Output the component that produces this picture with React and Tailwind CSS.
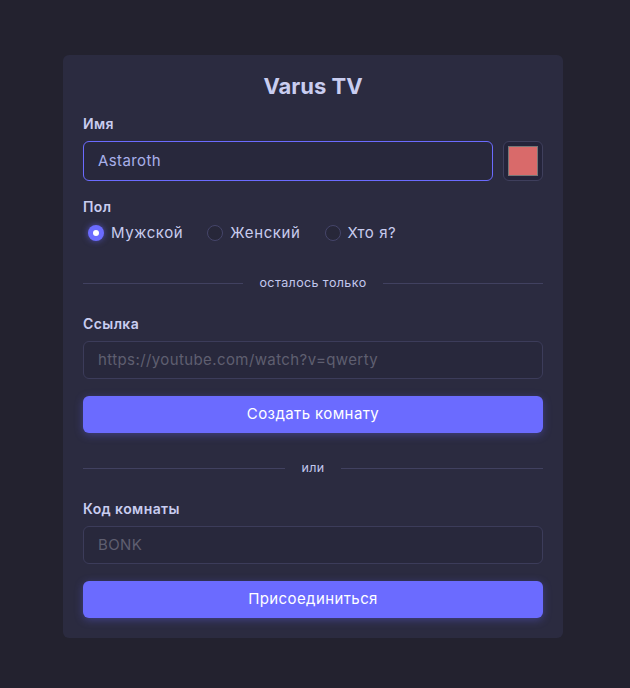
import React from 'react';

const font = { fontFamily: 'Inter, "Open Sans", sans-serif' };

const Divider = ({ label }) => (
  <div className="flex items-center gap-4 h-4">
    <div className="flex-1 h-px bg-[#414160]" />
    <span className="text-[12.5px] text-[#c3c8ee]">{label}</span>
    <div className="flex-1 h-px bg-[#414160]" />
  </div>
);

const Radio = ({ label, checked }) => (
  <label className="flex items-center gap-[7px]">
    <span
      className={`w-4 h-4 rounded-full flex items-center justify-center ${
        checked ? 'bg-[#6b6bff] shadow-[0_0_6px_rgba(107,107,255,0.6)]' : 'border border-[#45456a] bg-[#272739]'
      }`}
    >
      {checked && <span className="w-[6px] h-[6px] rounded-full bg-white" />}
    </span>
    <span className="text-[15px] text-[#c8cbee] tracking-[0.6px]">{label}</span>
  </label>
);

export default function App() {
  return (
    <div className="min-h-[688px] bg-[#23222f] flex justify-center pt-[55px] pr-[4px] tracking-[0.4px]" style={font}>
      <div className="w-[500px] h-[583px] bg-[#2b2b40] rounded-md px-5 pt-[14px] flex flex-col">
        <h1 className="text-center text-[22px] font-bold text-[#c9cdf0] leading-[34px] tracking-normal">Varus TV</h1>

        <div className="mt-[11px] text-[14px] font-semibold text-[#c9cdf0] leading-5">Имя</div>
        <div className="mt-[7px] flex gap-[10px]">
          <div className="flex-1 h-10 rounded-md border border-[#6b6bff] bg-[#28283c] px-[14px] flex items-center text-[15px] text-[#a9b0ea]">
            Astaroth
          </div>
          <div className="w-10 h-10 rounded-md border border-[#3f3f5c] bg-[#24243a] flex items-center justify-center">
            <div className="w-[30px] h-[30px] bg-[#d96a6a] border border-[#777777]" />
          </div>
        </div>

        <div className="mt-[16px] text-[14px] font-semibold text-[#c9cdf0] leading-5">Пол</div>
        <div className="mt-[6px] flex items-center pl-[5px] gap-[24px] h-[20px]">
          <Radio label="Мужской" checked />
          <Radio label="Женский" />
          <Radio label="Хто я?" />
        </div>

        <div className="mt-[32px]">
          <Divider label="осталось только" />
        </div>

        <div className="mt-[23px] text-[14px] font-semibold text-[#c9cdf0] leading-5">Ссылка</div>
        <div className="mt-[7px] h-[38px] rounded-md border border-[#3c3c5a] bg-[#28283c] px-[14px] flex items-center text-[15px] text-[#5f5f70]">
          https://youtube.com/watch?v=qwerty
        </div>
        <button className="mt-[17px] h-[37px] rounded-md bg-[#6b6bff] text-[15px] text-white shadow-[0_2px_8px_rgba(107,107,255,0.35)]">
          Создать комнату
        </button>

        <div className="mt-[27px]">
          <Divider label="или" />
        </div>

        <div className="mt-[23px] text-[14px] font-semibold text-[#c9cdf0] leading-5">Код комнаты</div>
        <div className="mt-[7px] h-[38px] rounded-md border border-[#3c3c5a] bg-[#28283c] px-[14px] flex items-center text-[15px] text-[#5f5f70]">
          BONK
        </div>
        <button className="mt-[17px] h-[37px] rounded-md bg-[#6b6bff] text-[15px] text-white shadow-[0_2px_8px_rgba(107,107,255,0.35)]">
          Присоединиться
        </button>
      </div>
    </div>
  );
}
